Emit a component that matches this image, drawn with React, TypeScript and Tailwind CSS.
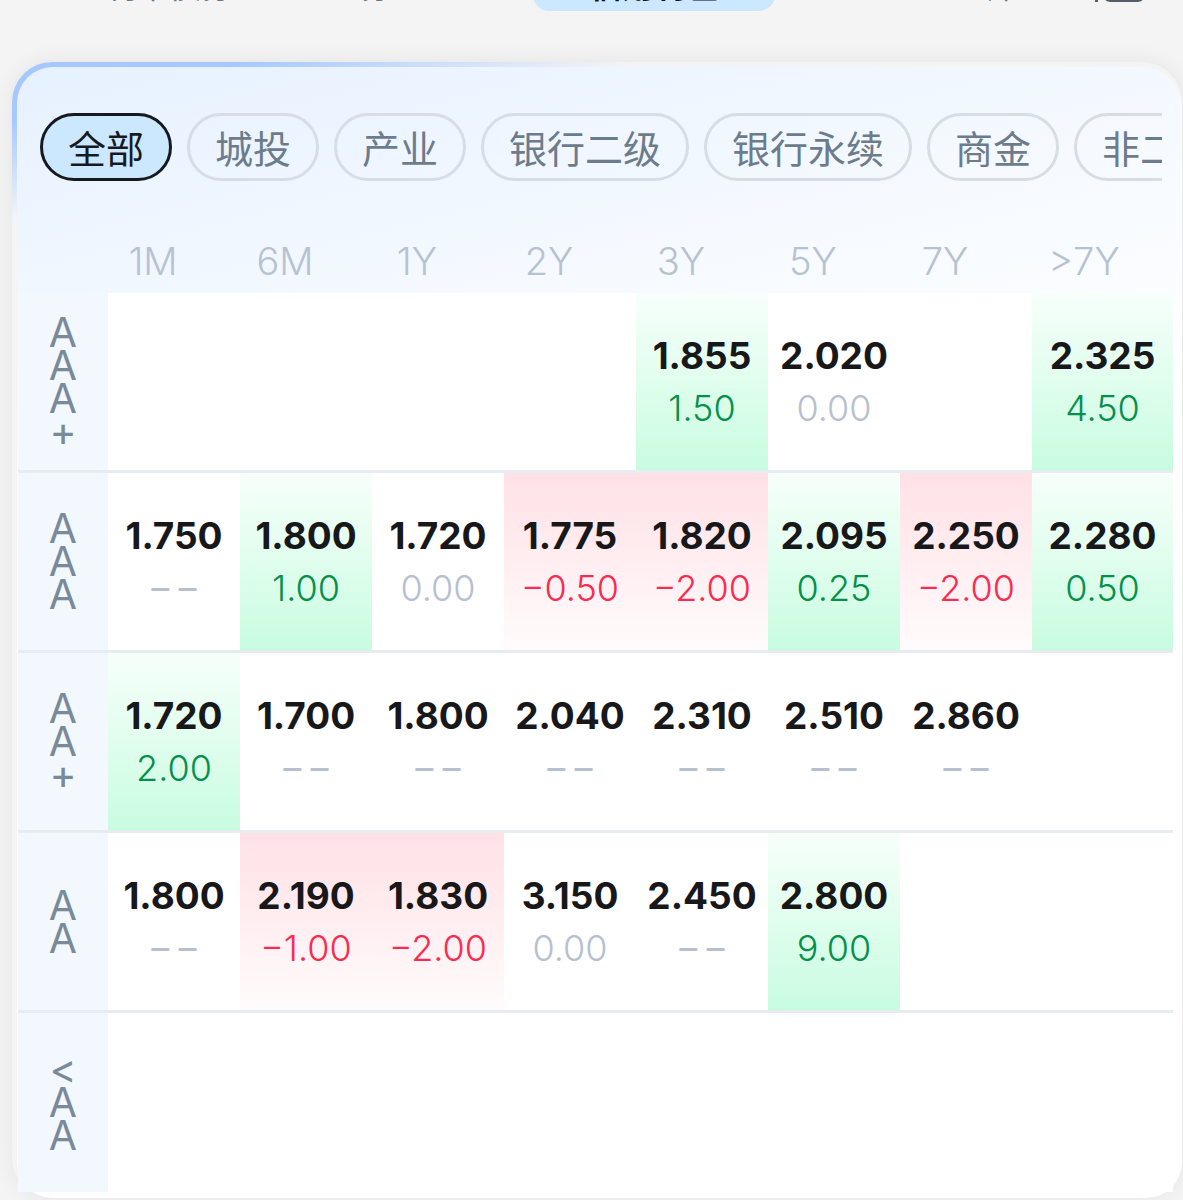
import React from 'react';

type Cell = { v: string; d: string } | null;

const cols = ['1M', '6M', '1Y', '2Y', '3Y', '5Y', '7Y', '>7Y'];
const chips = ['全部', '城投', '产业', '银行二级', '银行永续', '商金', '非二永续'];

const rows: { label: string[]; cells: Cell[] }[] = [
  {
    label: ['A', 'A', 'A', '+'],
    cells: [null, null, null, null, { v: '1.855', d: '1.50' }, { v: '2.020', d: '0.00' }, null, { v: '2.325', d: '4.50' }],
  },
  {
    label: ['A', 'A', 'A'],
    cells: [
      { v: '1.750', d: '--' },
      { v: '1.800', d: '1.00' },
      { v: '1.720', d: '0.00' },
      { v: '1.775', d: '−0.50' },
      { v: '1.820', d: '−2.00' },
      { v: '2.095', d: '0.25' },
      { v: '2.250', d: '−2.00' },
      { v: '2.280', d: '0.50' },
    ],
  },
  {
    label: ['A', 'A', '+'],
    cells: [
      { v: '1.720', d: '2.00' },
      { v: '1.700', d: '--' },
      { v: '1.800', d: '--' },
      { v: '2.040', d: '--' },
      { v: '2.310', d: '--' },
      { v: '2.510', d: '--' },
      { v: '2.860', d: '--' },
      null,
    ],
  },
  {
    label: ['A', 'A'],
    cells: [
      { v: '1.800', d: '--' },
      { v: '2.190', d: '−1.00' },
      { v: '1.830', d: '−2.00' },
      { v: '3.150', d: '0.00' },
      { v: '2.450', d: '--' },
      { v: '2.800', d: '9.00' },
      null,
      null,
    ],
  },
  { label: ['<', 'A', 'A'], cells: [null, null, null, null, null, null, null, null] },
];

const trend = (d: string) => {
  if (d === '--' || d === '0.00') return 'flat';
  return d.startsWith('−') ? 'down' : 'up';
};

const RateCell = ({ cell }: { cell: Cell }) => {
  if (!cell) return <div />;
  const t = trend(cell.d);
  return (
    <div
      className={
        'flex flex-col items-center justify-center ' +
        (t === 'up'
          ? 'bg-gradient-to-b from-[#f7fffb] to-[#c8fce0]'
          : t === 'down'
          ? 'bg-gradient-to-b from-[#ffe1e6] to-[#fffbfc]'
          : '')
      }
    >
      <span className="text-[37px] leading-[52px] font-bold text-[#18181b]">{cell.v}</span>
      {cell.d === '--' ? (
        <span className="inline-block scale-x-[1.55] text-[36px] leading-[52px] font-normal text-[#b6c0cf] tracking-[1px] pl-[1px]">
          --
        </span>
      ) : (
        <span
          className={
            'text-[36px] leading-[52px] font-light ' +
            (t === 'up' ? 'text-[#04904a]' : t === 'down' ? 'text-[#fb2a4e]' : 'text-[#b6c0cf]')
          }
        >
          {cell.d}
        </span>
      )}
    </div>
  );
};

const App = () => {
  return (
    <div className="min-h-[1200px] bg-[#f4f4f4] font-['Inter','Noto_Sans_CJK_SC',sans-serif]">
      {/* top tabs, scrolled mostly out of view */}
      <div className="h-[62px] overflow-hidden">
        <div className="-mt-[48px] h-[59px] flex items-end text-[32px] leading-[32px] font-['Noto_Sans_CJK_SC',sans-serif]">
          <span className="ml-[105px] w-[130px] pb-[11px] text-[#6a7682]">利率债券</span>
          <span className="ml-[125px] w-[120px] pb-[11px] text-[#6a7682]">信用债券</span>
          <div className="ml-[53px] w-[242px] h-full rounded-b-[16px] bg-[#cce8ff] flex items-end justify-center pb-[11px]">
            <span className="font-bold text-[#111]">信用利差</span>
          </div>
          <span className="ml-[210px] pb-[11px] text-[#6a7682]">筛</span>
          <div className="ml-[78px] mb-[9px] flex items-end gap-[6px]">
            <div className="w-[3px] h-[30px] bg-[#555e69]" />
            <div className="w-[40px] h-[30px] rounded-[6px] bg-[#555e69]" />
          </div>
        </div>
      </div>

      {/* card */}
      <div className="ml-[12px] w-[1170px] rounded-[40px] pt-[5px] pl-[5px] bg-[linear-gradient(166deg,#a6c8ff_0%,#a6c8ff_4%,rgba(166,200,255,0)_11%)] shadow-[0_0_22px_rgba(0,0,0,0.07)]">
        <div className="rounded-[36px] rounded-tr-[40px] bg-[linear-gradient(166deg,#e6f1ff_0%,#f6faff_25%,#ffffff_45%)] pt-[46px] pb-[6px]">
          {/* chips */}
          <div className="ml-[23px] mr-[20px] overflow-hidden">
            <div className="flex gap-[15px] font-['Noto_Sans_CJK_SC',sans-serif]">
              {chips.map((c, i) => (
                <div
                  key={c}
                  className={
                    'shrink-0 h-[68px] px-[25px] rounded-[34px] border-[3px] flex items-center justify-center text-[38px] leading-none whitespace-nowrap ' +
                    (i === 0
                      ? 'border-[#161a1f] bg-[#cce8ff] text-[#161a1f]'
                      : 'border-[#d6dde5] text-[#6c7c8c]')
                  }
                >
                  {c}
                </div>
              ))}
            </div>
          </div>

          {/* header */}
          <div className="ml-[1px] h-[112px] grid grid-cols-[69px_repeat(7,132px)_146px] items-end pb-[12px]">
            <div />
            {cols.map((c) => (
              <div key={c} className="text-center text-[38px] leading-[40px] font-light text-[#b7c2d1]">
                {c}
              </div>
            ))}
          </div>

          {/* table */}
          <div className="ml-[1px] w-[1155px] bg-white">
            {rows.map((r, ri) => (
              <div
                key={ri}
                className={
                  'grid grid-cols-[90px_repeat(7,132px)_1fr] ' +
                  (ri < rows.length - 1 ? 'h-[180px] border-b-[3px] border-[#e7ecf1]' : 'h-[179px]')
                }
              >
                <div className="bg-[#f3f8fe] flex flex-col items-center justify-center text-[41px] leading-[33px] text-[#7a8a99]">
                  {r.label.map((ch, k) => (
                    <span key={k}>{ch}</span>
                  ))}
                </div>
                {r.cells.map((c, ci) => (
                  <RateCell key={ci} cell={c} />
                ))}
              </div>
            ))}
          </div>
        </div>
      </div>
    </div>
  );
};

export default App;
